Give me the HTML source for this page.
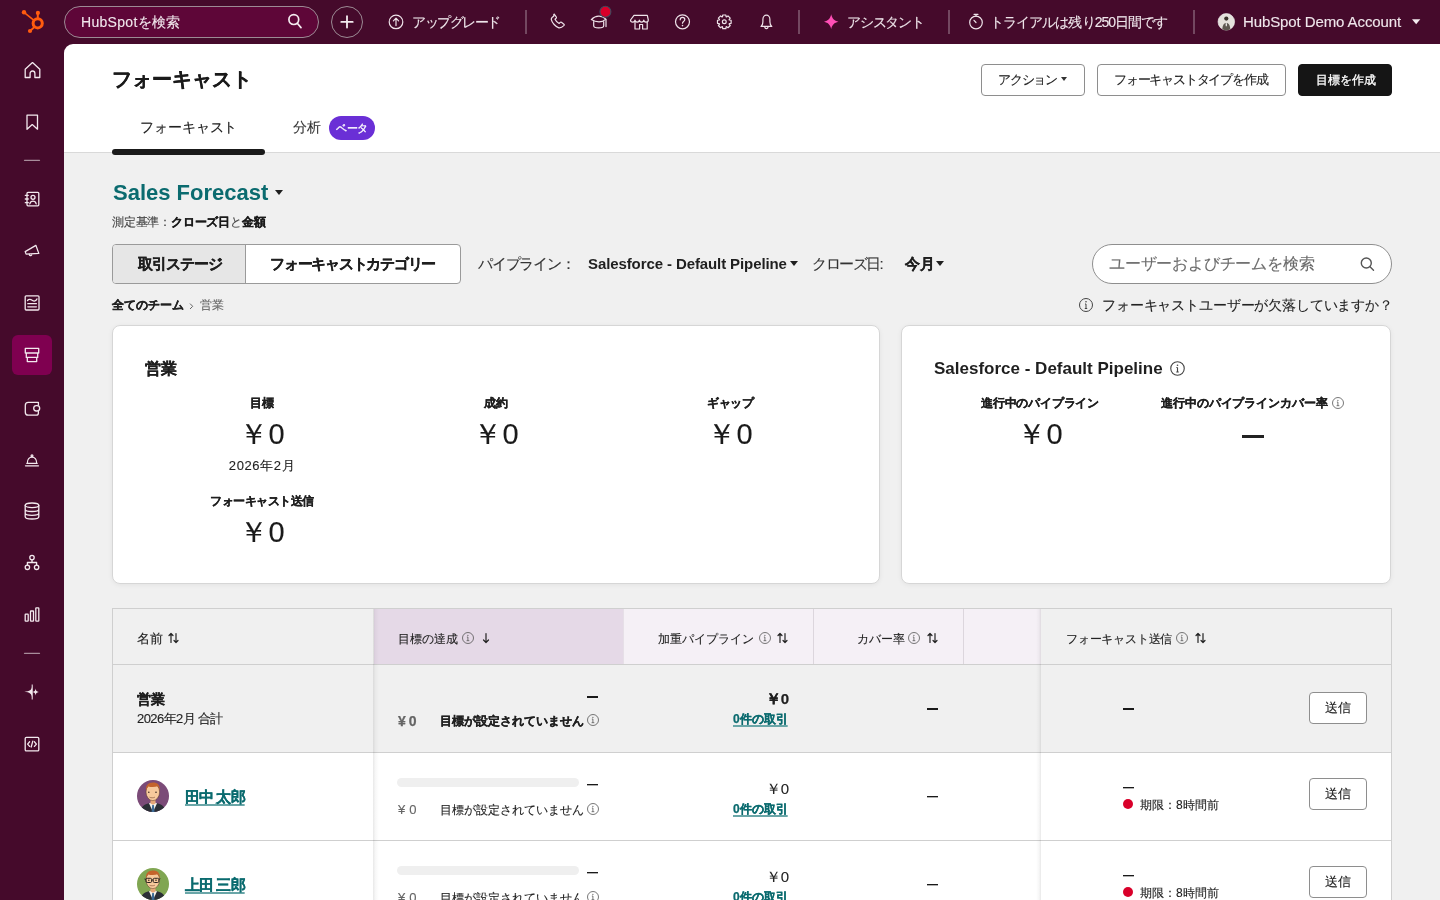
<!DOCTYPE html>
<html lang="ja">
<head>
<meta charset="utf-8">
<style>
*{box-sizing:border-box;margin:0;padding:0}
html,body{width:1440px;height:900px;overflow:hidden}
body{font-family:"Liberation Sans",sans-serif;background:#f0f0f0;color:#1f1f1f;position:relative}
.a{position:absolute;white-space:nowrap}
#root{-webkit-text-stroke:0.12px currentColor}
[style*="font-weight:bold"],b,.lbl,.lnk{-webkit-text-stroke:0.25px currentColor}
.lat{-webkit-text-stroke:0 !important}
#top{left:0;top:0;width:1440px;height:44px;background:#450a2b}
#side{left:0;top:44px;width:64px;height:856px;background:#450a2b}
#hdr{left:64px;top:44px;width:1376px;height:109px;background:#fff;border-top-left-radius:9px;border-bottom:1px solid #d9d9d9}
.nt{color:#efe6eb;font-size:14px;line-height:16px}
.div{width:1px;background:#8c6a7d}
.btn{border:1px solid #8e8e8e;border-radius:4px;background:#fff;font-size:13px;line-height:30px;text-align:center;color:#222}
.card{background:#fff;border:1px solid #d6d6d6;border-radius:8px;box-shadow:0 1px 5px rgba(0,0,0,.06)}
.lbl{font-size:12px;font-weight:bold;text-align:center;line-height:14px}
.big{font-size:29px;text-align:center;line-height:32px;color:#1a1a1a}
.th{font-size:12px;line-height:16px;color:#222}
.lnk{font-size:12px;font-weight:bold;line-height:16px;color:#0b6b6f;text-decoration:underline;text-decoration-color:#6aa6a8;text-decoration-thickness:1.5px;text-underline-offset:2px;letter-spacing:0}
svg.ic{position:absolute;fill:none;stroke:#f3e9ee;stroke-width:1.3;stroke-linecap:round;stroke-linejoin:round}
</style>
</head>
<body>
<div id="root" style="position:absolute;left:0;top:0;width:1440px;height:900px;will-change:transform">
<!-- top nav -->
<div class="a" style="left:0;top:0;width:1440px;height:60px;background:#450a2b"></div>
<div id="side" class="a"></div>
<div id="hdr" class="a"></div>
<svg class="a" style="left:0;top:0" width="1440" height="44" viewBox="0 0 1440 44">
 <g fill="#ff5c0f" stroke="#ff5c0f">
  <circle cx="37.7" cy="23.3" r="4.6" fill="none" stroke-width="3"/>
  <line x1="37.8" y1="13" x2="37.8" y2="18" stroke-width="2"/>
  <circle cx="37.9" cy="12.9" r="2.1" stroke="none"/>
  <line x1="24" y1="12.3" x2="34" y2="20.3" stroke-width="1.6"/>
  <circle cx="24" cy="12.3" r="2.2" stroke="none"/>
  <line x1="30" y1="31" x2="34.5" y2="27" stroke-width="1.8"/>
  <circle cx="30" cy="31" r="2.1" stroke="none"/>
 </g>
 <rect x="64.5" y="6.5" width="254" height="31" rx="15.5" fill="#5e0638" stroke="#9c8a94" stroke-width="1"/>
 <g fill="none" stroke="#f4ecf0" stroke-width="1.7" stroke-linecap="round">
  <circle cx="293.8" cy="19.6" r="4.9"/>
  <line x1="297.3" y1="23.3" x2="301" y2="27.6"/>
 </g>
 <circle cx="347" cy="22" r="15.5" fill="none" stroke="#9c8a94" stroke-width="1"/>
 <g stroke="#f4ecf0" stroke-width="1.8" stroke-linecap="round"><line x1="341.3" y1="21.9" x2="352.7" y2="21.9"/><line x1="347" y1="16.2" x2="347" y2="27.6"/></g>
 <g fill="none" stroke="#eee3e9" stroke-width="1.2" stroke-linecap="round" stroke-linejoin="round">
  <circle cx="396" cy="21.9" r="6.8"/>
  <path d="M396 25.6V18.4M393.4 20.8L396 18.2L398.6 20.8"/>
  <path d="M553.8 16.3c-1.6.7-2.7 1.6-2.5 3.3.8 3.2 4.2 7.2 7.6 8.2 1.6.2 3.4-.7 5.2-2.4.3-.3.2-.8-.2-1.2l-2.5-1.9c-.4-.3-.9-.2-1.2.1l-1.1 1.1c-1.7-.8-3.2-2.4-4.1-4.2l1.2-1.1c.3-.3.3-.7.1-1.1l-1.7-2.6c-.2-.4-.6-.4-.8-.2z"/>
  <path d="M591.3 19.6c2.5-2.6 5.5-3.6 7.8-3.5 2.6.1 5 1.3 6.8 3-2 1.9-4.4 2.8-6.9 2.8-2.6 0-5.3-.8-7.7-2.3z"/>
  <path d="M593.7 21.5v4.2c0 1.2 2.3 2.1 5 2.1s5-.9 5-2.1v-4.2"/>
  <path d="M606 19.6v7"/>
  <path d="M634 15.4h13.3l1 4.6c0 1.3-1.1 2.1-2.3 2.1s-2.2-.8-2.2-2c0 1.2-1 2-2.2 2s-2.2-.8-2.2-2c0 1.2-1 2-2.2 2s-2.2-.8-2.2-2c0 1.2-1 2-2.2 2s-2.3-.8-2.3-2.1z"/>
  <path d="M635 22.2v6.8h4.6v-4.5h3v4.5h4.6v-6.8"/>
  <circle cx="682.5" cy="21.8" r="7"/>
  <path d="M680.2 19.8c0-1.5 1-2.4 2.3-2.4s2.3.9 2.3 2.2c0 1.9-2.3 2-2.3 3.6"/>
  <path d="M722.49 16.82 L722.73 14.98 L725.87 14.98 L726.11 16.82 L726.54 17.00 L728.01 15.86 L730.24 18.09 L729.10 19.56 L729.28 19.99 L731.12 20.23 L731.12 23.37 L729.28 23.61 L729.10 24.04 L730.24 25.51 L728.01 27.74 L726.54 26.60 L726.11 26.78 L725.87 28.62 L722.73 28.62 L722.49 26.78 L722.06 26.60 L720.59 27.74 L718.36 25.51 L719.50 24.04 L719.32 23.61 L717.48 23.37 L717.48 20.23 L719.32 19.99 L719.50 19.56 L718.36 18.09 L720.59 15.86 L722.06 17.00Z"/>
  <circle cx="724.3" cy="21.8" r="1.9"/>
  <path d="M761 26.4c1.5-1 1.9-2.4 1.9-4.6v-2.4c0-2.5 1.6-4.3 3.5-4.3s3.5 1.8 3.5 4.3v2.4c0 2.2.4 3.6 1.9 4.6z"/>
  <path d="M764.8 26.6c0 1.3.7 2.1 1.6 2.1s1.6-.8 1.6-2.1"/>
  <circle cx="976" cy="22.5" r="6.3"/>
  <path d="M974 14.3h4M976 14.3v1.9M976 22.5l-2-2.2"/>
 </g>
 <g fill="#eee3e9"><circle cx="682.5" cy="25.6" r=".8"/></g>
 <circle cx="605.4" cy="11.7" r="5.5" fill="#d9002a" stroke="#3e4b5e" stroke-width="1.1"/>
 <g stroke="#8d6b7e" stroke-width="1.3"><line x1="526" y1="10" x2="526" y2="34"/><line x1="799" y1="10" x2="799" y2="34"/><line x1="949" y1="10" x2="949" y2="34"/><line x1="1194" y1="10" x2="1194" y2="34"/></g>
 <path d="M831.2 14.3c.9 4.2 3 6.5 7.2 7.4-4.2.9-6.3 3.1-7.2 7.3-.9-4.2-3-6.4-7.2-7.3 4.2-.9 6.3-3.2 7.2-7.4z" fill="#ff4fb6"/>
 <circle cx="1226.3" cy="21.8" r="8.3" fill="#e4e2dc" stroke="#f4f0f2" stroke-width=".6"/>
 <path d="M1222.3 29.3c.3-3.6 1.3-6.2 4-6.2s3.7 2.6 4 6.2a8.3 8.3 0 0 1-8 0z" fill="#5e5a52"/>
 <circle cx="1226.3" cy="18.6" r="2.1" fill="#3a332c"/>
 <path d="M1225.6 23.2h1.4l-.2 3h-1z" fill="#f4f4f4"/>
 <path d="M1412 19.3h8.3l-4.15 5z" fill="#f4ecf0"/>
</svg>
<div class="a nt" style="left:81px;top:14px;font-size:14px;color:#f0e6ec;letter-spacing:0.3px">HubSpotを検索</div>
<div class="a nt" style="left:412px;top:14px;letter-spacing:-1.45px">アップグレード</div>
<div class="a nt" style="left:847px;top:14px;letter-spacing:-1.2px">アシスタント</div>
<div class="a nt" style="left:990px;top:14px;letter-spacing:-0.92px">トライアルは残り250日間です</div>
<div class="a nt" style="left:1243px;top:14px;font-size:15px;letter-spacing:-0.1px">HubSpot Demo Account</div>


<!-- sidebar icons -->
<svg class="a" style="left:0;top:44px" width="64" height="856" viewBox="0 44 64 856">
 <rect x="12" y="335" width="40" height="40" rx="6" fill="#7f0050"/>
 <g fill="none" stroke="#f3e9ee" stroke-width="1.3" stroke-linecap="round" stroke-linejoin="round">
  <path d="M25.2 69.2l7.3-6.6 7.3 6.6v8.3h-4.9v-4.1c0-1.3-1.1-2.4-2.4-2.4s-2.4 1.1-2.4 2.4v4.1h-4.9z"/>
  <path d="M27 115.2h10.5v14l-5.25-4.6-5.25 4.6z"/>
  <path d="M24.5 160.3h15" stroke="#a88d9b"/>
  <rect x="27" y="192.3" width="11.8" height="13.5" rx="1"/>
  <path d="M25.3 195.3h3M25.3 199h3M25.3 202.7h3"/>
  <circle cx="33" cy="197.3" r="2"/>
  <path d="M29.8 203.8c.5-1.8 1.7-2.6 3.2-2.6s2.7.8 3.2 2.6"/>
  <path d="M25.2 251.6l10.7-6.2 2.9 8-12.7.7z"/><path d="M29.3 254.5a1.2 1.2 0 0 0 2.3.4"/>
  <rect x="25.2" y="295.8" width="13.8" height="14.2" rx="1"/>
  <path d="M27.5 300.5c1.7-2 3.5-1 5 0s3.5.7 4.4-1.6M27.8 303.7h8.6M27.8 306.8h8.6"/>
  <path d="M25.3 348.4h13.4v4.6H25.3z M26.3 353v4.4h11.4V353 M27.3 357.4v4.2h9.4v-4.2"/>
  <path d="M38.4 402.4H28.3c-1.7 0-3 1.3-3 3v6.8c0 1.7 1.3 3 3 3h7.9c1.2 0 2.2-1 2.2-2.2v-1.5M38.4 402.4v2.8"/><rect x="33.7" y="405.6" width="6" height="5.4" rx="2.7"/>
  <path d="M25.5 465.8h13M26.8 463.3h10.4M27.3 463.3c0-3.9 2.2-6.2 4.7-6.2s4.7 2.3 4.7 6.2"/><circle cx="32" cy="455.8" r=".9"/>
  <ellipse cx="32" cy="505.3" rx="6.8" ry="2.3"/><path d="M25.2 505.3v11.4c0 1.3 3 2.3 6.8 2.3s6.8-1 6.8-2.3V505.3M25.2 509.2c0 1.3 3 2.3 6.8 2.3s6.8-1 6.8-2.3M25.2 513c0 1.3 3 2.3 6.8 2.3s6.8-1 6.8-2.3"/>
  <circle cx="32" cy="557.6" r="2.2"/><circle cx="27.4" cy="567.3" r="2.2"/><circle cx="36.6" cy="567.3" r="2.2"/><path d="M32 559.8v2.7M27.4 565.1v-2.6h9.2v2.6"/>
  <rect x="25.2" y="614.2" width="3" height="7" rx=".5"/><rect x="30.5" y="611" width="3" height="10.2" rx=".5"/><rect x="35.8" y="607.8" width="3" height="13.4" rx=".5"/>
  <path d="M24.5 653.3h15" stroke="#a88d9b"/>
  <rect x="25.2" y="737.3" width="13.6" height="13.6" rx="1.2"/><path d="M29.6 741.8l-2 2.3 2 2.3M34.4 741.8l2 2.3-2 2.3M32.8 741.2l-1.6 5.8"/>
 </g>
 <path d="M32.2 684.5v15" stroke="#f3e9ee" stroke-width="1"/><path d="M32.2 685.8c-.5 4.3-2.4 5.7-7.9 6 5.5.4 7.4 1.9 7.9 6.2z" fill="#f3e9ee"/><path d="M35.6 688.6c.3 2.3 1 3 3.2 3.4-2.2.4-2.9 1.1-3.2 3.4-.3-2.3-1-3-3.1-3.4 2.1-.4 2.8-1.1 3.1-3.4z" fill="#f3e9ee"/>
</svg>

<!-- page header -->
<div class="a" style="left:112px;top:67px;font-size:20px;font-weight:bold;line-height:24px;color:#1a1a1a;letter-spacing:0">フォーキャスト</div>
<div class="a" style="left:140px;top:119px;font-size:14px;line-height:16px;color:#222;letter-spacing:-0.1px">フォーキャスト</div>
<div class="a" style="left:112px;top:149px;width:153px;height:6px;border-radius:3px;background:#1a1a1a"></div>
<div class="a" style="left:293px;top:119px;font-size:14px;line-height:16px;color:#333">分析</div>
<div class="a" style="left:329px;top:116px;width:46px;height:24px;border-radius:12px;background:#6a2fd6;color:#fff;font-size:11px;-webkit-text-stroke:0.3px #fff;line-height:24px;text-align:center;letter-spacing:-0.6px">ベータ</div>
<div class="a btn" style="left:981px;top:64px;width:104px;height:32px"></div><div class="a" style="left:998px;top:72px;font-size:13px;line-height:16px;color:#222;letter-spacing:-1.2px">アクション</div><div class="a" style="left:1061px;top:77px;width:0;height:0;border-left:3.5px solid transparent;border-right:3.5px solid transparent;border-top:4.5px solid #333"></div>
<div class="a btn" style="left:1097px;top:64px;width:189px;height:32px"></div><div class="a" style="left:1114px;top:72px;font-size:13px;line-height:16px;color:#222;letter-spacing:-1.2px">フォーキャストタイプを作成</div>
<div class="a btn" style="left:1298px;top:64px;width:94px;height:32px;background:#151515;border-color:#151515"></div><div class="a" style="left:1316px;top:72px;font-size:12px;line-height:16px;color:#fff;-webkit-text-stroke:0.3px #fff;letter-spacing:0">目標を作成</div>

<!-- filter area -->
<div class="a lat" style="left:113px;top:180px;font-size:22px;font-weight:bold;line-height:26px;color:#0b6b6f">Sales Forecast</div>
<div class="a" style="left:275px;top:190px;width:0;height:0;border-left:4px solid transparent;border-right:4px solid transparent;border-top:5px solid #1f1f1f"></div>
<div class="a" style="left:112px;top:214px;font-size:12px;line-height:16px;color:#444;letter-spacing:-0.2px">測定基準：<b style="color:#1a1a1a">クローズ日</b>と<b style="color:#1a1a1a">金額</b></div>
<div class="a" style="left:112px;top:244px;width:349px;height:40px;border:1px solid #9a9a9a;border-radius:4px;background:#fff;overflow:hidden">
 <div class="a" style="left:0;top:0;width:133px;height:38px;background:#e6e6e6;border-right:1px solid #9a9a9a"></div>
 <div class="a" style="left:25px;top:11px;font-size:14.5px;font-weight:bold;line-height:16px;color:#1f1f1f;letter-spacing:-1.1px">取引ステージ</div>
 <div class="a" style="left:157px;top:11px;font-size:15px;font-weight:bold;line-height:16px;color:#1f1f1f;letter-spacing:-1.25px">フォーキャストカテゴリー</div>
</div>
<div class="a" style="left:478px;top:255px;font-size:15px;line-height:18px;color:#333;letter-spacing:-1.17px">パイプライン：</div>
<div class="a lat" style="left:588px;top:255px;font-size:15px;font-weight:bold;line-height:18px;color:#1f1f1f;letter-spacing:-0.1px">Salesforce - Default Pipeline</div>
<div class="a" style="left:790px;top:261px;width:0;height:0;border-left:4px solid transparent;border-right:4px solid transparent;border-top:5px solid #1f1f1f"></div>
<div class="a" style="left:812px;top:255px;font-size:15px;line-height:18px;color:#333;letter-spacing:-1.5px">クローズ日:</div>
<div class="a" style="left:905px;top:255px;font-size:15px;font-weight:bold;line-height:18px;color:#1f1f1f">今月</div>
<div class="a" style="left:936px;top:261px;width:0;height:0;border-left:4px solid transparent;border-right:4px solid transparent;border-top:5px solid #1f1f1f"></div>
<div class="a" style="left:1092px;top:244px;width:300px;height:40px;border:1px solid #8e8e8e;border-radius:20px;background:#fff"></div>
<div class="a" style="left:1109px;top:255px;font-size:16px;line-height:18px;color:#6b6b6b;letter-spacing:-0.2px">ユーザーおよびチームを検索</div>
<svg class="a" style="left:1355px;top:252px" width="24" height="24" viewBox="0 0 24 24"><g fill="none" stroke="#555" stroke-width="1.4" stroke-linecap="round"><circle cx="11.3" cy="11" r="5"/><line x1="15" y1="14.8" x2="18.5" y2="18.3"/></g></svg>
<div class="a" style="left:112px;top:297px;font-size:12px;font-weight:bold;line-height:16px;color:#222;letter-spacing:0">全てのチーム</div>
<svg class="a" style="left:188px;top:300px" width="8" height="12" viewBox="0 0 8 12"><path d="M2 3.6l2.7 2.7-2.7 2.7" fill="none" stroke="#666" stroke-width="1"/></svg>
<div class="a" style="left:200px;top:297px;font-size:12px;line-height:16px;color:#666">営業</div>
<svg class="a" style="left:1078px;top:297px" width="16" height="16" viewBox="0 0 16 16"><g fill="none" stroke="#444" stroke-width="1"><circle cx="8" cy="8" r="6.5"/><path d="M8 7v4.5M6.8 11.5h2.4M7 7h1"/></g><circle cx="8" cy="4.8" r=".8" fill="#444"/></svg>
<div class="a" style="left:1102px;top:296px;font-size:14px;line-height:18px;color:#222;letter-spacing:-0.15px">フォーキャストユーザーが欠落していますか？</div>


<!-- cards -->
<div class="a card" style="left:112px;top:325px;width:768px;height:259px"></div>
<div class="a" style="left:145px;top:360px;font-size:16px;font-weight:bold;line-height:18px">営業</div>
<div class="a lbl" style="left:145px;top:396px;width:234px">目標</div>
<div class="a big" style="left:145px;top:418px;width:234px">￥0</div>
<div class="a" style="left:145px;top:458px;width:234px;text-align:center;font-size:13px;line-height:16px;letter-spacing:0.6px">2026年2月</div>
<div class="a lbl" style="left:145px;top:494px;width:234px;letter-spacing:-0.5px">フォーキャスト送信</div>
<div class="a big" style="left:145px;top:516px;width:234px">￥0</div>
<div class="a lbl" style="left:379px;top:396px;width:234px">成約</div>
<div class="a big" style="left:379px;top:418px;width:234px">￥0</div>
<div class="a lbl" style="left:613px;top:396px;width:234px;letter-spacing:-0.5px">ギャップ</div>
<div class="a big" style="left:613px;top:418px;width:234px">￥0</div>

<div class="a card" style="left:901px;top:325px;width:490px;height:259px"></div>
<div class="a lat" style="left:934px;top:360px;font-size:17px;font-weight:bold;line-height:18px">Salesforce - Default Pipeline</div>
<svg class="a" style="left:1170px;top:361px" width="15" height="15" viewBox="0 0 12 12"><g fill="none" stroke="#444" stroke-width=".9"><circle cx="6" cy="6" r="5.4"/><path d="M6 5.2v3.6M5 8.8h2M5.1 5.2h.9"/></g><circle cx="6" cy="3.4" r=".65" fill="#444"/></svg>
<div class="a lbl" style="left:934px;top:396px;width:212px;letter-spacing:-0.2px">進行中のパイプライン</div>
<div class="a big" style="left:934px;top:418px;width:212px">￥0</div>
<div class="a lbl" style="left:1146px;top:396px;width:212px;letter-spacing:-0.1px">進行中のパイプラインカバー率 <span style="display:inline-block;width:12px"></span></div>
<svg class="a" style="left:1332px;top:397px" width="12" height="12" viewBox="0 0 12 12"><g fill="none" stroke="#555" stroke-width=".8"><circle cx="6" cy="6" r="5.5"/><path d="M5.9 5v3.7M4.6 8.7h2.7M4.9 5h1"/></g><circle cx="5.9" cy="3.3" r=".6" fill="#555"/></svg>
<div class="a" style="left:1242px;top:435px;width:22px;height:3px;background:#222"></div>

<!-- table -->
<div class="a" style="left:112px;top:608px;width:1280px;height:300px;border:1px solid #cfcfcf;background:#fff"></div>
<div class="a" style="left:113px;top:609px;width:1278px;height:55px;background:#f0f0f0"></div>
<div class="a" style="left:374px;top:609px;width:249px;height:55px;background:#e5d9e7"></div>
<div class="a" style="left:623px;top:609px;width:418px;height:55px;background:#f5f0f6"></div>
<div class="a" style="left:113px;top:664px;width:1278px;height:1px;background:#cfcfcf"></div>
<div class="a" style="left:113px;top:665px;width:1278px;height:87px;background:#f0f0f0"></div>
<div class="a" style="left:113px;top:752px;width:1278px;height:1px;background:#cfcfcf"></div>
<div class="a" style="left:113px;top:840px;width:1278px;height:1px;background:#cfcfcf"></div>
<div class="a" style="left:373px;top:609px;width:6px;height:300px;background:linear-gradient(to right,rgba(0,0,0,.09),rgba(0,0,0,.03) 40%,rgba(0,0,0,0))"></div>
<div class="a" style="left:623px;top:609px;width:1px;height:55px;background:#e6dfe7"></div>
<div class="a" style="left:813px;top:609px;width:1px;height:55px;background:#dcd6dd"></div>
<div class="a" style="left:963px;top:609px;width:1px;height:55px;background:#dcd6dd"></div>
<div class="a" style="left:1036px;top:609px;width:5px;height:300px;background:linear-gradient(to left,rgba(0,0,0,.09),rgba(0,0,0,.03) 40%,rgba(0,0,0,0))"></div>

<div class="a th" style="left:137px;top:631px;font-size:12.5px">名前</div>
<svg class="a" style="left:168px;top:632px" width="11" height="12" viewBox="0 0 11 12"><g fill="none" stroke="#222" stroke-width="1.2" stroke-linecap="round" stroke-linejoin="round"><path d="M3 10.5V1.5M1 3.5l2-2 2 2M8 1.5v9M6 8.5l2 2 2-2"/></g></svg>
<div class="a th" style="left:398px;top:631px">目標の達成</div>
<svg class="a" style="left:462px;top:632px" width="12" height="12" viewBox="0 0 12 12"><g fill="none" stroke="#555" stroke-width=".8"><circle cx="6" cy="6" r="5.5"/><path d="M5.9 5v3.7M4.6 8.7h2.7M4.9 5h1"/></g><circle cx="5.9" cy="3.3" r=".6" fill="#555"/></svg>
<svg class="a" style="left:481px;top:632px" width="10" height="12" viewBox="0 0 10 12"><path d="M5 1.5v9M2.5 8l2.5 2.5L7.5 8" fill="none" stroke="#222" stroke-width="1.2" stroke-linecap="round" stroke-linejoin="round"/></svg>
<div class="a th" style="left:658px;top:631px">加重パイプライン</div>
<svg class="a" style="left:759px;top:632px" width="12" height="12" viewBox="0 0 12 12"><g fill="none" stroke="#555" stroke-width=".8"><circle cx="6" cy="6" r="5.5"/><path d="M5.9 5v3.7M4.6 8.7h2.7M4.9 5h1"/></g><circle cx="5.9" cy="3.3" r=".6" fill="#555"/></svg><svg class="a" style="left:777px;top:632px" width="11" height="12" viewBox="0 0 11 12"><g fill="none" stroke="#222" stroke-width="1.2" stroke-linecap="round" stroke-linejoin="round"><path d="M3 10.5V1.5M1 3.5l2-2 2 2M8 1.5v9M6 8.5l2 2 2-2"/></g></svg>
<div class="a th" style="left:857px;top:631px">カバー率</div>
<svg class="a" style="left:908px;top:632px" width="12" height="12" viewBox="0 0 12 12"><g fill="none" stroke="#555" stroke-width=".8"><circle cx="6" cy="6" r="5.5"/><path d="M5.9 5v3.7M4.6 8.7h2.7M4.9 5h1"/></g><circle cx="5.9" cy="3.3" r=".6" fill="#555"/></svg><svg class="a" style="left:927px;top:632px" width="11" height="12" viewBox="0 0 11 12"><g fill="none" stroke="#222" stroke-width="1.2" stroke-linecap="round" stroke-linejoin="round"><path d="M3 10.5V1.5M1 3.5l2-2 2 2M8 1.5v9M6 8.5l2 2 2-2"/></g></svg>
<div class="a th" style="left:1066px;top:631px;letter-spacing:-0.2px">フォーキャスト送信</div>
<svg class="a" style="left:1176px;top:632px" width="12" height="12" viewBox="0 0 12 12"><g fill="none" stroke="#555" stroke-width=".8"><circle cx="6" cy="6" r="5.5"/><path d="M5.9 5v3.7M4.6 8.7h2.7M4.9 5h1"/></g><circle cx="5.9" cy="3.3" r=".6" fill="#555"/></svg><svg class="a" style="left:1195px;top:632px" width="11" height="12" viewBox="0 0 11 12"><g fill="none" stroke="#222" stroke-width="1.2" stroke-linecap="round" stroke-linejoin="round"><path d="M3 10.5V1.5M1 3.5l2-2 2 2M8 1.5v9M6 8.5l2 2 2-2"/></g></svg>

<!-- summary row -->
<div class="a" style="left:137px;top:691px;font-size:14px;font-weight:bold;line-height:16px">営業</div>
<div class="a" style="left:137px;top:711px;font-size:13px;line-height:16px;letter-spacing:-0.6px">2026年2月 合計</div>
<div class="a" style="left:587px;top:696px;width:11px;height:2px;background:#1a1a1a"></div>
<div class="a" style="left:398px;top:713px;font-size:14px;font-weight:bold;line-height:16px;color:#666;letter-spacing:3px">¥0</div>
<div class="a" style="left:440px;top:713px;font-size:12px;font-weight:bold;line-height:16px;letter-spacing:0">目標が設定されていません</div>
<svg class="a" style="left:587px;top:714px" width="12" height="12" viewBox="0 0 12 12"><g fill="none" stroke="#555" stroke-width=".8"><circle cx="6" cy="6" r="5.5"/><path d="M5.9 5v3.7M4.6 8.7h2.7M4.9 5h1"/></g><circle cx="5.9" cy="3.3" r=".6" fill="#555"/></svg>
<div class="a" style="left:689px;top:691px;width:100px;text-align:right;font-size:15px;font-weight:bold;line-height:16px">￥0</div>
<div class="a lnk" style="left:733px;top:711px">0件の取引</div>
<div class="a" style="left:927px;top:708px;width:11px;height:2px;background:#1a1a1a"></div>
<div class="a" style="left:1123px;top:708px;width:11px;height:2px;background:#1a1a1a"></div>
<div class="a btn" style="left:1309px;top:692px;width:58px;height:32px">送信</div>

<svg class="a" style="left:137px;top:780px" width="32" height="32" viewBox="0 0 32 32"><defs><clipPath id="cp780"><circle cx="16" cy="16" r="16"/></clipPath></defs><g clip-path="url(#cp780)"><rect width="32" height="32" fill="#7b4b78"/>
<path d="M3 32c1-5 4-7.5 8-8.5l5-1 5 1c4 1 7 3.5 8 8.5z" fill="#2b2f36"/>
<path d="M12 23.3l4 8.7 4-8.7-4-1.3z" fill="#f4f1ea"/><path d="M15.2 25h1.7l.6 7h-2.9z" fill="#3d6c97"/>
<path d="M13.5 19h5v4.5l-2.5 1.3-2.5-1.3z" fill="#e6a878"/>
<ellipse cx="15.8" cy="12" rx="6.8" ry="8.6" fill="#f7c99c" stroke="#5a3a28" stroke-width=".5"/>
<path d="M9 10.5c-.5-5 2-8 6.8-8s7.5 2.5 7 8.5c-.6-2.5-1.2-4-2.2-4.8-2.5 1-6.5 1-9.5.2-.8 1-1.5 2.4-2.1 4.1z" fill="#c4632c"/>
<circle cx="11.8" cy="12.3" r=".8" fill="#3a2a20"/><circle cx="19" cy="12.3" r=".8" fill="#3a2a20"/><path d="M12.5 17.2c1.6.8 3.6.8 5.4 0" fill="none" stroke="#8a5a40" stroke-width=".7"/></g></svg>
<div class="a lnk" style="left:185px;top:788px;font-size:15px;line-height:17px;letter-spacing:-0.9px">田中 太郎</div>
<div class="a" style="left:397px;top:778px;width:182px;height:9px;border-radius:5px;background:#efefef"></div>
<div class="a" style="left:587px;top:784px;width:11px;height:1px;background:#1a1a1a;box-shadow:0 1px 0 rgba(26,26,26,.35)"></div>
<div class="a" style="left:398px;top:802px;font-size:13px;line-height:16px;color:#666;letter-spacing:4px">¥0</div>
<div class="a" style="left:440px;top:802px;font-size:12px;line-height:16px;letter-spacing:0;color:#222">目標が設定されていません</div>
<svg class="a" style="left:587px;top:803px" width="12" height="12" viewBox="0 0 12 12"><g fill="none" stroke="#555" stroke-width=".8"><circle cx="6" cy="6" r="5.5"/><path d="M5.9 5v3.7M4.6 8.7h2.7M4.9 5h1"/></g><circle cx="5.9" cy="3.3" r=".6" fill="#555"/></svg>
<div class="a" style="left:689px;top:781px;width:100px;text-align:right;font-size:15px;line-height:16px">￥0</div>
<div class="a lnk" style="left:733px;top:801px">0件の取引</div>
<div class="a" style="left:927px;top:796px;width:11px;height:1px;background:#1a1a1a;box-shadow:0 1px 0 rgba(26,26,26,.35)"></div>
<div class="a" style="left:1123px;top:787px;width:11px;height:1px;background:#1a1a1a;box-shadow:0 1px 0 rgba(26,26,26,.35)"></div>
<div class="a" style="left:1123px;top:799px;width:10px;height:10px;border-radius:50%;background:#d9002a"></div>
<div class="a" style="left:1140px;top:797px;font-size:12px;line-height:16px;letter-spacing:0">期限：8時間前</div>
<div class="a btn" style="left:1309px;top:778px;width:58px;height:32px">送信</div>

<svg class="a" style="left:137px;top:868px" width="32" height="32" viewBox="0 0 32 32"><defs><clipPath id="cp868"><circle cx="16" cy="16" r="16"/></clipPath></defs><g clip-path="url(#cp868)"><rect width="32" height="32" fill="#80a652"/>
<path d="M3 32c1-5 4-7.5 8-8.5l5-1 5 1c4 1 7 3.5 8 8.5z" fill="#2b2f36"/>
<path d="M12 23.3l4 8.7 4-8.7-4-1.3z" fill="#f4f1ea"/><path d="M15.2 25h1.7l.6 7h-2.9z" fill="#3d6c97"/>
<path d="M13.5 19h5v4.5l-2.5 1.3-2.5-1.3z" fill="#e6a878"/>
<ellipse cx="15.8" cy="12" rx="6.8" ry="8.6" fill="#f7c99c" stroke="#5a3a28" stroke-width=".5"/>
<path d="M9 10.5c-.5-5 2-8 6.8-8s7.5 2.5 7 8.5c-.6-2.5-1.2-4-2.2-4.8-2.5 1-6.5 1-9.5.2-.8 1-1.5 2.4-2.1 4.1z" fill="#c4632c"/>
<circle cx="11.8" cy="12.3" r=".8" fill="#3a2a20"/><circle cx="19" cy="12.3" r=".8" fill="#3a2a20"/><path d="M12.5 17.2c1.6.8 3.6.8 5.4 0" fill="none" stroke="#8a5a40" stroke-width=".7"/><g fill="none" stroke="#2a2320" stroke-width="1"><rect x="9" y="10.3" width="5.6" height="4.2" rx="1.2"/><rect x="16.2" y="10.3" width="5.6" height="4.2" rx="1.2"/><path d="M14.6 12h1.6M9 11.5l-1.5-.5M21.8 11.5l1.5-.8"/></g></g></svg>
<div class="a lnk" style="left:185px;top:876px;font-size:15px;line-height:17px;letter-spacing:-0.9px">上田 三郎</div>
<div class="a" style="left:397px;top:866px;width:182px;height:9px;border-radius:5px;background:#efefef"></div>
<div class="a" style="left:587px;top:872px;width:11px;height:1px;background:#1a1a1a;box-shadow:0 1px 0 rgba(26,26,26,.35)"></div>
<div class="a" style="left:398px;top:890px;font-size:13px;line-height:16px;color:#666;letter-spacing:4px">¥0</div>
<div class="a" style="left:440px;top:890px;font-size:12px;line-height:16px;letter-spacing:0;color:#222">目標が設定されていません</div>
<svg class="a" style="left:587px;top:891px" width="12" height="12" viewBox="0 0 12 12"><g fill="none" stroke="#555" stroke-width=".8"><circle cx="6" cy="6" r="5.5"/><path d="M5.9 5v3.7M4.6 8.7h2.7M4.9 5h1"/></g><circle cx="5.9" cy="3.3" r=".6" fill="#555"/></svg>
<div class="a" style="left:689px;top:869px;width:100px;text-align:right;font-size:15px;line-height:16px">￥0</div>
<div class="a lnk" style="left:733px;top:889px">0件の取引</div>
<div class="a" style="left:927px;top:884px;width:11px;height:1px;background:#1a1a1a;box-shadow:0 1px 0 rgba(26,26,26,.35)"></div>
<div class="a" style="left:1123px;top:875px;width:11px;height:1px;background:#1a1a1a;box-shadow:0 1px 0 rgba(26,26,26,.35)"></div>
<div class="a" style="left:1123px;top:887px;width:10px;height:10px;border-radius:50%;background:#d9002a"></div>
<div class="a" style="left:1140px;top:885px;font-size:12px;line-height:16px;letter-spacing:0">期限：8時間前</div>
<div class="a btn" style="left:1309px;top:866px;width:58px;height:32px">送信</div>

</div>
</body>
</html>
